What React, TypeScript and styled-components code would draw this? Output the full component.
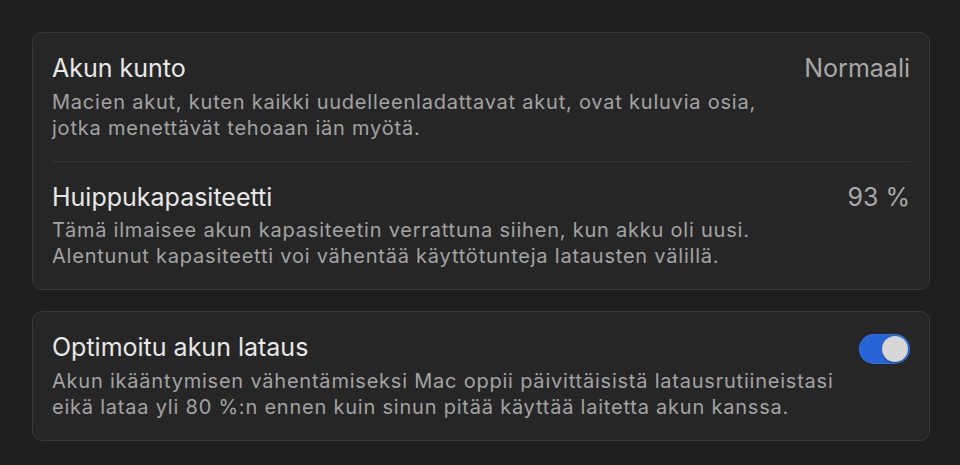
import React, { useState } from "react";
import styled, { createGlobalStyle } from "styled-components";

const colors = {
  Bg: "#1e1e1e",
  Card: "#262626",
  Border: "#393939",
  Separator: "#353535",
  Title: "#e8e8e8",
  Text: "#a3a3a3",
  Value: "#a8a8a8",
  Accent: "#2764d8",
  Knob: "#d6d6d6",
};

const GlobalStyle = createGlobalStyle`
  html, body {
    margin: 0;
    padding: 0;
    background: ${colors.Bg};
  }
  body {
    font-family: Inter, "Liberation Sans", Arial, sans-serif;
    -webkit-font-smoothing: antialiased;
  }
`;

const PageS = styled.div`
  width: 960px;
  height: 465px;
  box-sizing: border-box;
  padding: 32px 30px 0 32px;
  display: flex;
  flex-direction: column;
  gap: 21px;
  background: ${colors.Bg};
`;

const CardS = styled.section`
  background: ${colors.Card};
  border: 1px solid ${colors.Border};
  border-radius: 10px;
  padding: 0 19px;
`;

const RowS = styled.div<{ divider?: boolean }>`
  display: flex;
  align-items: flex-start;
  justify-content: space-between;
  gap: 24px;
  padding: 19px 0 20px;
  border-top: ${(props) => (props.divider ? `1px solid ${colors.Separator}` : "none")};
`;

const TextColS = styled.div`
  display: flex;
  flex-direction: column;
  gap: 4.5px;
`;

const TitleS = styled.div`
  font-size: 25px;
  line-height: 32px;
  color: ${colors.Title};
`;

const DescS = styled.div`
  font-size: 20px;
  line-height: 26px;
  letter-spacing: 0.78px;
  color: ${colors.Text};
`;

const ValueS = styled.div`
  font-size: 25px;
  line-height: 32px;
  color: ${colors.Value};
  white-space: nowrap;
`;

const SwitchS = styled.button<{ on: boolean }>`
  position: relative;
  flex: 0 0 auto;
  width: 51px;
  height: 30px;
  margin-top: 2.5px;
  padding: 0;
  border: none;
  border-radius: 15px;
  background: ${(props) => (props.on ? colors.Accent : "#4a4a4a")};
  box-shadow: inset 0 0 0 1px rgba(255, 255, 255, 0.08);
  cursor: pointer;
`;

const KnobS = styled.span<{ on: boolean }>`
  position: absolute;
  top: 2px;
  left: ${(props) => (props.on ? "23px" : "2px")};
  width: 26px;
  height: 26px;
  border-radius: 50%;
  background: ${colors.Knob};
  box-shadow: 0 1px 2px rgba(0, 0, 0, 0.35);
  transition: 0.2s left ease-in;
`;

interface IRow {
  title: string;
  lines: string[];
  value?: string;
}

const rows: IRow[] = [
  {
    title: "Akun kunto",
    lines: [
      "Macien akut, kuten kaikki uudelleenladattavat akut, ovat kuluvia osia,",
      "jotka menettävät tehoaan iän myötä.",
    ],
    value: "Normaali",
  },
  {
    title: "Huippukapasiteetti",
    lines: [
      "Tämä ilmaisee akun kapasiteetin verrattuna siihen, kun akku oli uusi.",
      "Alentunut kapasiteetti voi vähentää käyttötunteja latausten välillä.",
    ],
    value: "93 %",
  },
];

const Description = ({ lines }: { lines: string[] }) => (
  <DescS>
    {lines.map((l) => (
      <div key={l}>{l}</div>
    ))}
  </DescS>
);

export default function App() {
  const [optimized, setOptimized] = useState(true);

  return (
    <>
      <GlobalStyle />
      <PageS>
        <CardS>
          {rows.map((r, i) => (
            <RowS key={r.title} divider={i > 0}>
              <TextColS>
                <TitleS>{r.title}</TitleS>
                <Description lines={r.lines} />
              </TextColS>
              <ValueS>{r.value}</ValueS>
            </RowS>
          ))}
        </CardS>
        <CardS>
          <RowS>
            <TextColS>
              <TitleS>Optimoitu akun lataus</TitleS>
              <Description
                lines={[
                  "Akun ikääntymisen vähentämiseksi Mac oppii päivittäisistä latausrutiineistasi",
                  "eikä lataa yli 80 %:n ennen kuin sinun pitää käyttää laitetta akun kanssa.",
                ]}
              />
            </TextColS>
            <SwitchS on={optimized} onClick={() => setOptimized(!optimized)}>
              <KnobS on={optimized} />
            </SwitchS>
          </RowS>
        </CardS>
      </PageS>
    </>
  );
}
